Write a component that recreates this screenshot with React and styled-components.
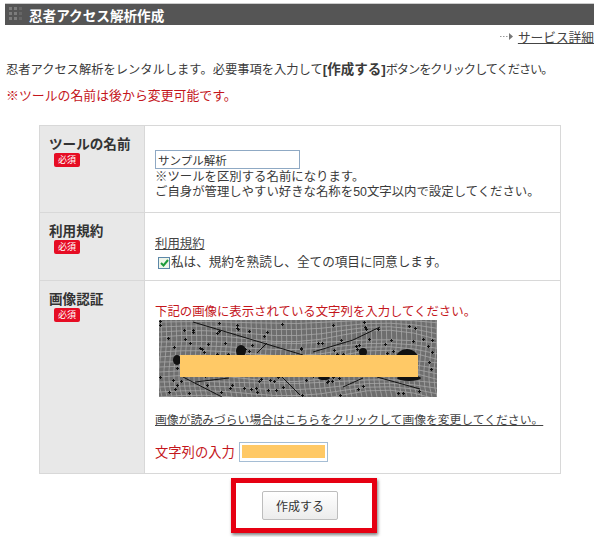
import React from 'react';
import styled, { createGlobalStyle } from 'styled-components';

const GlobalStyle = createGlobalStyle`
  html, body {
    margin: 0;
    padding: 0;
    background: #fff;
  }
  body {
    font-family: "Liberation Sans", "Noto Sans CJK JP", sans-serif;
    font-size: 12.5px;
    color: #3a3a3a;
  }
`;

const Page = styled.div`
  width: 600px;
  height: 537px;
  overflow: hidden;
  padding: 3px 6px 0 5px;
  box-sizing: border-box;
`;

const TitleBar = styled.h1`
  margin: 0;
  height: 22px;
  display: flex;
  align-items: center;
  gap: 5px;
  padding-left: 4px;
  background: #555;
  border-top: 1px solid #ccc;
  box-sizing: border-box;
  color: #fff;
  font-size: 13.6px;
  font-weight: bold;
`;

const Dots = styled.span`
  display: grid;
  grid-template-columns: repeat(3, 3px);
  gap: 2px;
  width: 15px;
  margin-top: -2px;
  i {
    width: 3px;
    height: 3px;
    background: #7c7c7c;
  }
  i:nth-child(3n) {
    background: #666;
  }
`;

const ServiceRow = styled.div`
  display: flex;
  justify-content: flex-end;
  align-items: center;
  gap: 5px;
  height: 23px;
  font-size: 12.7px;
`;

const PlainLink = styled.a`
  color: #444;
  text-decoration: underline;
`;

const Lead = styled.p`
  margin: 13px 0 0 1px;
  font-size: 12.28px;
  line-height: 18px;
  white-space: nowrap;
  b {
    font-size: 13.5px;
  }
`;

const LeadTail = styled.span`
  letter-spacing: -1.1px;
`;

const Notice = styled.p`
  margin: 8px 0 0 1px;
  font-size: 12.9px;
  line-height: 18px;
  color: #c4161c;
`;

const FormTable = styled.div`
  margin: 20px 0 0 34px;
  width: 522px;
  border: 1px solid #d8d8d8;
  border-bottom: 0;
  box-sizing: border-box;
`;

const Row = styled.div`
  display: grid;
  grid-template-columns: 105px 1fr;
  height: ${(p) => p.$height}px;
  border-bottom: 1px solid #d8d8d8;
  box-sizing: border-box;
`;

const Label = styled.div`
  background: #e8e8e8;
  border-right: 1px solid #d8d8d8;
  padding: 11px 0 0 9px;
  font-size: 13.6px;
  line-height: 16px;
  font-weight: bold;
  color: #333;
`;

const Required = styled.span`
  display: block;
  width: 26px;
  height: 14px;
  margin: 0 0 0 5px;
  background: #e60d24;
  border-radius: 2px;
  color: #fff;
  font-size: 9px;
  font-weight: normal;
  line-height: 14px;
  text-align: center;
`;

const Cell = styled.div`
  padding: ${(p) => p.$top}px 0 0 10px;
  font-size: 12.4px;
  line-height: 15px;
  white-space: nowrap;
`;

const NameInput = styled.input`
  display: block;
  width: 145px;
  height: 19px;
  padding: 0 2px;
  border: 1px solid #8fa9c4;
  box-sizing: border-box;
  font: inherit;
  font-size: 11.5px;
  color: #333;
  outline: none;
`;

const Hint = styled.div`
  margin-top: 1px;
`;

const AgreeLine = styled.div`
  display: flex;
  align-items: center;
  gap: 1px;
  margin-left: 3px;
  margin-top: 3px;
  font-size: 12.6px;
`;

const CheckBox = styled.span`
  display: flex;
  align-items: center;
  justify-content: center;
  width: 12px;
  height: 12px;
  border: 1px solid #5c87a8;
  background: #f0f6ea;
  box-sizing: border-box;
`;

const RedLine = styled.div`
  color: #c4161c;
  font-size: 12.4px;
  line-height: 16px;
`;

const Captcha = styled.div`
  position: relative;
  width: 278px;
  height: 77px;
  margin-left: 4px;
  background: #808080;
`;

const CaptchaMask = styled.div`
  position: absolute;
  left: 21px;
  top: 35px;
  width: 238px;
  height: 22px;
  background: #ffc966;
`;

const ReloadLine = styled.div`
  margin-top: 16px;
  font-size: 11.8px;
`;

const InputLine = styled.div`
  display: flex;
  align-items: center;
  gap: 4px;
  margin-top: 14px;
  color: #c4161c;
  font-size: 13.3px;
`;

const CodeInput = styled.div`
  width: 89px;
  height: 20px;
  padding: 2px;
  border: 1px solid #a5bdd4;
  box-sizing: border-box;
  background: #fff;
  div {
    width: 83px;
    height: 13px;
    background: #ffc966;
  }
`;

const Actions = styled.div`
  display: flex;
  justify-content: center;
  margin-top: 4px;
  margin-left: 9px;
`;

const Highlight = styled.div`
  display: flex;
  align-items: center;
  justify-content: center;
  width: 146px;
  height: 55px;
  padding-right: 8px;
  border: 5px solid #e60012;
  box-sizing: border-box;
  box-shadow: 1px 2px 3px rgba(0, 0, 0, 0.5);
`;

const SubmitButton = styled.button`
  width: 76px;
  height: 29px;
  padding: 0;
  border: 1px solid #bdbdbd;
  border-radius: 2px;
  background: linear-gradient(#fff, #ececec);
  font-family: inherit;
  font-size: 12px;
  color: #333;
`;

// 歪んだ格子とノイズ (画像認証のダミー)
const gridLinesH = Array.from({ length: 16 }, (_, i) => {
  const y = 2 + i * 5;
  const a = 1.5 + (i % 4);
  return `M0 ${y} Q 45 ${y - a} 92 ${y + a / 2} T 185 ${y - a / 2} T 278 ${y + a / 2}`;
});
const gridLinesV = Array.from({ length: 56 }, (_, i) => {
  const x = 2 + i * 5;
  return `M${x} 0 Q ${x + 2} 20 ${x - 1} 40 T ${x + 1} 77`;
});
const specks = Array.from({ length: 130 }, (_, i) => ({
  x: Math.floor(Math.abs(Math.sin(i * 12.9898) * 43758.5453) % 275),
  y: Math.floor(Math.abs(Math.sin(i * 78.233) * 24634.6345) % 75),
}));

const CaptchaArt = () => (
  <svg width="278" height="77" viewBox="0 0 278 77" style={{ display: 'block' }}>
    <rect width="278" height="77" fill="#6e6e6e" />
    <g stroke="#a6a6a6" strokeWidth="0.8" fill="none">
      {gridLinesH.map((d) => <path key={d} d={d} />)}
      {gridLinesV.map((d) => <path key={d} d={d} />)}
    </g>
    <g fill="#111">
      {specks.map((s, i) => (
        <path key={i} d={`M${s.x} ${s.y + 1}h3v1h-3zM${s.x + 1} ${s.y}h1v3h-1z`} />
      ))}
      <ellipse cx="82" cy="31" rx="5" ry="6" />
      <ellipse cx="204" cy="32" rx="4" ry="4" />
      <ellipse cx="248" cy="38" rx="11" ry="9" />
      <ellipse cx="250" cy="58" rx="12" ry="3" />
      <ellipse cx="165" cy="58" rx="6" ry="2" />
      <ellipse cx="18" cy="40" rx="4" ry="5" />
    </g>
    <g stroke="#111" fill="none" strokeWidth="1">
      <path d="M34 2 L144 35" />
      <path d="M24 57 L63 77" />
      <path d="M123 57 L141 75" />
      <path d="M98 33 L108 23" />
      <path d="M154 32 L194 20 L221 7" />
      <path d="M218 57 L261 69" />
      <path d="M184 67 L204 58" />
      <path d="M36 62 L70 58" />
    </g>
  </svg>
);

const App = () => {
  return (
    <Page>
      <GlobalStyle />
      <TitleBar>
        <Dots>{Array.from({ length: 9 }, (_, i) => <i key={i} />)}</Dots>
        忍者アクセス解析作成
      </TitleBar>
      <ServiceRow>
        <svg width="13" height="7" viewBox="0 0 13 7">
          <path d="M0 3.5h1.5M3 3.5h1.5M6 3.5h1.5" stroke="#999" fill="none" />
          <path d="M9 0l4 3.5-4 3.5z" fill="#777" />
        </svg>
        <PlainLink>サービス詳細</PlainLink>
      </ServiceRow>
      <Lead>
        忍者アクセス解析をレンタルします。必要事項を入力して<b>[作成する]</b>
        <LeadTail>ボタンをクリックしてください。</LeadTail>
      </Lead>
      <Notice>※ツールの名前は後から変更可能です。</Notice>
      <FormTable>
        <Row $height={87}>
          <Label>
            ツールの名前
            <Required>必須</Required>
          </Label>
          <Cell $top={24}>
            <NameInput defaultValue="サンプル解析" />
            <Hint>
              ※ツールを区別する名前になります。
              <br />
              ご自身が管理しやすい好きな名称を50文字以内で設定してください。
            </Hint>
          </Cell>
        </Row>
        <Row $height={68}>
          <Label>
            利用規約
            <Required>必須</Required>
          </Label>
          <Cell $top={24}>
            <PlainLink>利用規約</PlainLink>
            <AgreeLine>
              <CheckBox>
                <svg width="9" height="8" viewBox="0 0 9 8">
                  <path d="M1 4l2.5 2.5L8 1" stroke="#1e9b3a" strokeWidth="2" fill="none" />
                </svg>
              </CheckBox>
              私は、規約を熟読し、全ての項目に同意します。
            </AgreeLine>
          </Cell>
        </Row>
        <Row $height={193}>
          <Label>
            画像認証
            <Required>必須</Required>
          </Label>
          <Cell $top={23}>
            <RedLine>下記の画像に表示されている文字列を入力してください。</RedLine>
            <Captcha>
              <CaptchaArt />
              <CaptchaMask />
            </Captcha>
            <ReloadLine>
              <PlainLink>画像が読みづらい場合はこちらをクリックして画像を変更してください。</PlainLink>
            </ReloadLine>
            <InputLine>
              文字列の入力
              <CodeInput>
                <div />
              </CodeInput>
            </InputLine>
          </Cell>
        </Row>
      </FormTable>
      <Actions>
        <Highlight>
          <SubmitButton>作成する</SubmitButton>
        </Highlight>
      </Actions>
    </Page>
  );
};

export default App;
